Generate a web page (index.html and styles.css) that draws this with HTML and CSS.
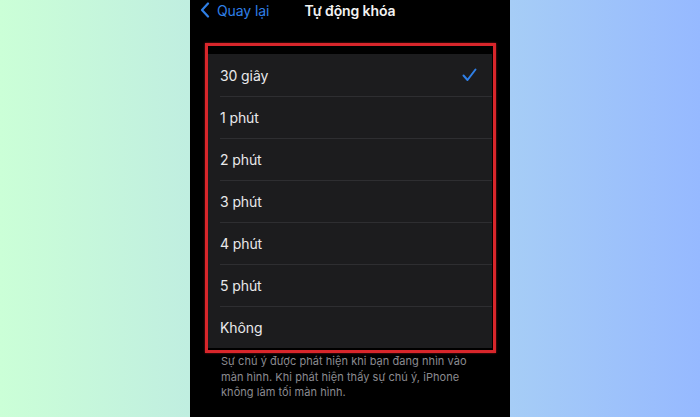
FILE: index.html
```html
<!DOCTYPE html>
<html lang="vi">
<head>
<meta charset="utf-8">
<title>Tự động khóa</title>
<link rel="stylesheet" href="styles.css">
</head>
<body>
<div class="stage">
  <div class="phone">
    <nav class="nav">
      <a class="back">
        <svg class="chev" width="10" height="16" viewBox="0 0 10 16"><path d="M8 1.5 L2 8 L8 14.5" fill="none" stroke="#2f7fe6" stroke-width="2.2" stroke-linecap="round" stroke-linejoin="round"/></svg>
        <span>Quay lại</span>
      </a>
      <div class="title">Tự động khóa</div>
      <div></div>
    </nav>
    <div class="highlight">
      <ul class="card">
        <li class="row"><span class="label">30 giây</span>
          <svg class="check" width="15" height="14" viewBox="0 0 15 14"><path d="M1.5 7.5 L5.5 12 L13.5 1.5" fill="none" stroke="#2f7fe6" stroke-width="2" stroke-linecap="round" stroke-linejoin="round"/></svg>
        </li>
        <li class="row"><span class="label">1 phút</span></li>
        <li class="row"><span class="label">2 phút</span></li>
        <li class="row"><span class="label">3 phút</span></li>
        <li class="row"><span class="label">4 phút</span></li>
        <li class="row"><span class="label">5 phút</span></li>
        <li class="row"><span class="label">Không</span></li>
      </ul>
    </div>
    <p class="note">Sự chú ý được phát hiện khi bạn đang nhìn vào màn hình. Khi phát hiện thấy sự chú ý, iPhone không làm tối màn hình.</p>
  </div>
</div>
</body>
</html>
```
FILE: styles.css
```css
html, body {
  margin: 0;
  padding: 0;
  height: 100%;
}
body {
  font-family: Inter, "Noto Sans", "DejaVu Sans", sans-serif;
  overflow: hidden;
}
.stage {
  width: 700px;
  height: 417px;
  display: flex;
  justify-content: center;
  background: linear-gradient(90deg, #cbffd7 0%, #c0eee0 27%, #a6cdf6 73%, #96b9ff 100%);
}
.phone {
  width: 320px;
  height: 417px;
  background: #000;
  box-sizing: border-box;
  padding: 0 14px 0 15px;
  display: flex;
  flex-direction: column;
}
.nav {
  height: 20px;
  display: grid;
  grid-template-columns: 1fr auto 1fr;
  align-items: center;
  margin: 0 -14px 0 -15px;
}
.back {
  display: flex;
  align-items: center;
  gap: 7px;
  padding-left: 10px;
  color: #2f7fe6;
  font-size: 14px;
  letter-spacing: -0.1px;
}
.chev {
  display: block;
}
.title {
  color: #f2f2f2;
  font-size: 14px;
  font-weight: 600;
  letter-spacing: -0.1px;
}
.highlight {
  margin-top: 23px;
  border: 3px solid #d8262b;
  padding: 8px 1px 2px 0;
  box-shadow: 0 0 2px rgba(216, 38, 43, 0.6);
}
.card {
  list-style: none;
  margin: 0;
  padding: 0;
  background: #1c1c1e;
}
.row {
  height: 42px;
  margin-left: 12px;
  padding-right: 15px;
  display: flex;
  align-items: center;
  justify-content: space-between;
  border-top: 1px solid #2e2e31;
  box-sizing: border-box;
}
.row:first-child {
  border-top: none;
}
.label {
  color: #e9e9eb;
  font-size: 14px;
  letter-spacing: -0.1px;
}
.check {
  display: block;
}
.note {
  margin: 0;
  padding: 1px 10px 0 16px;
  color: #8b8b90;
  font-size: 11px;
  line-height: 15.5px;
  letter-spacing: 0.05px;
}
```
